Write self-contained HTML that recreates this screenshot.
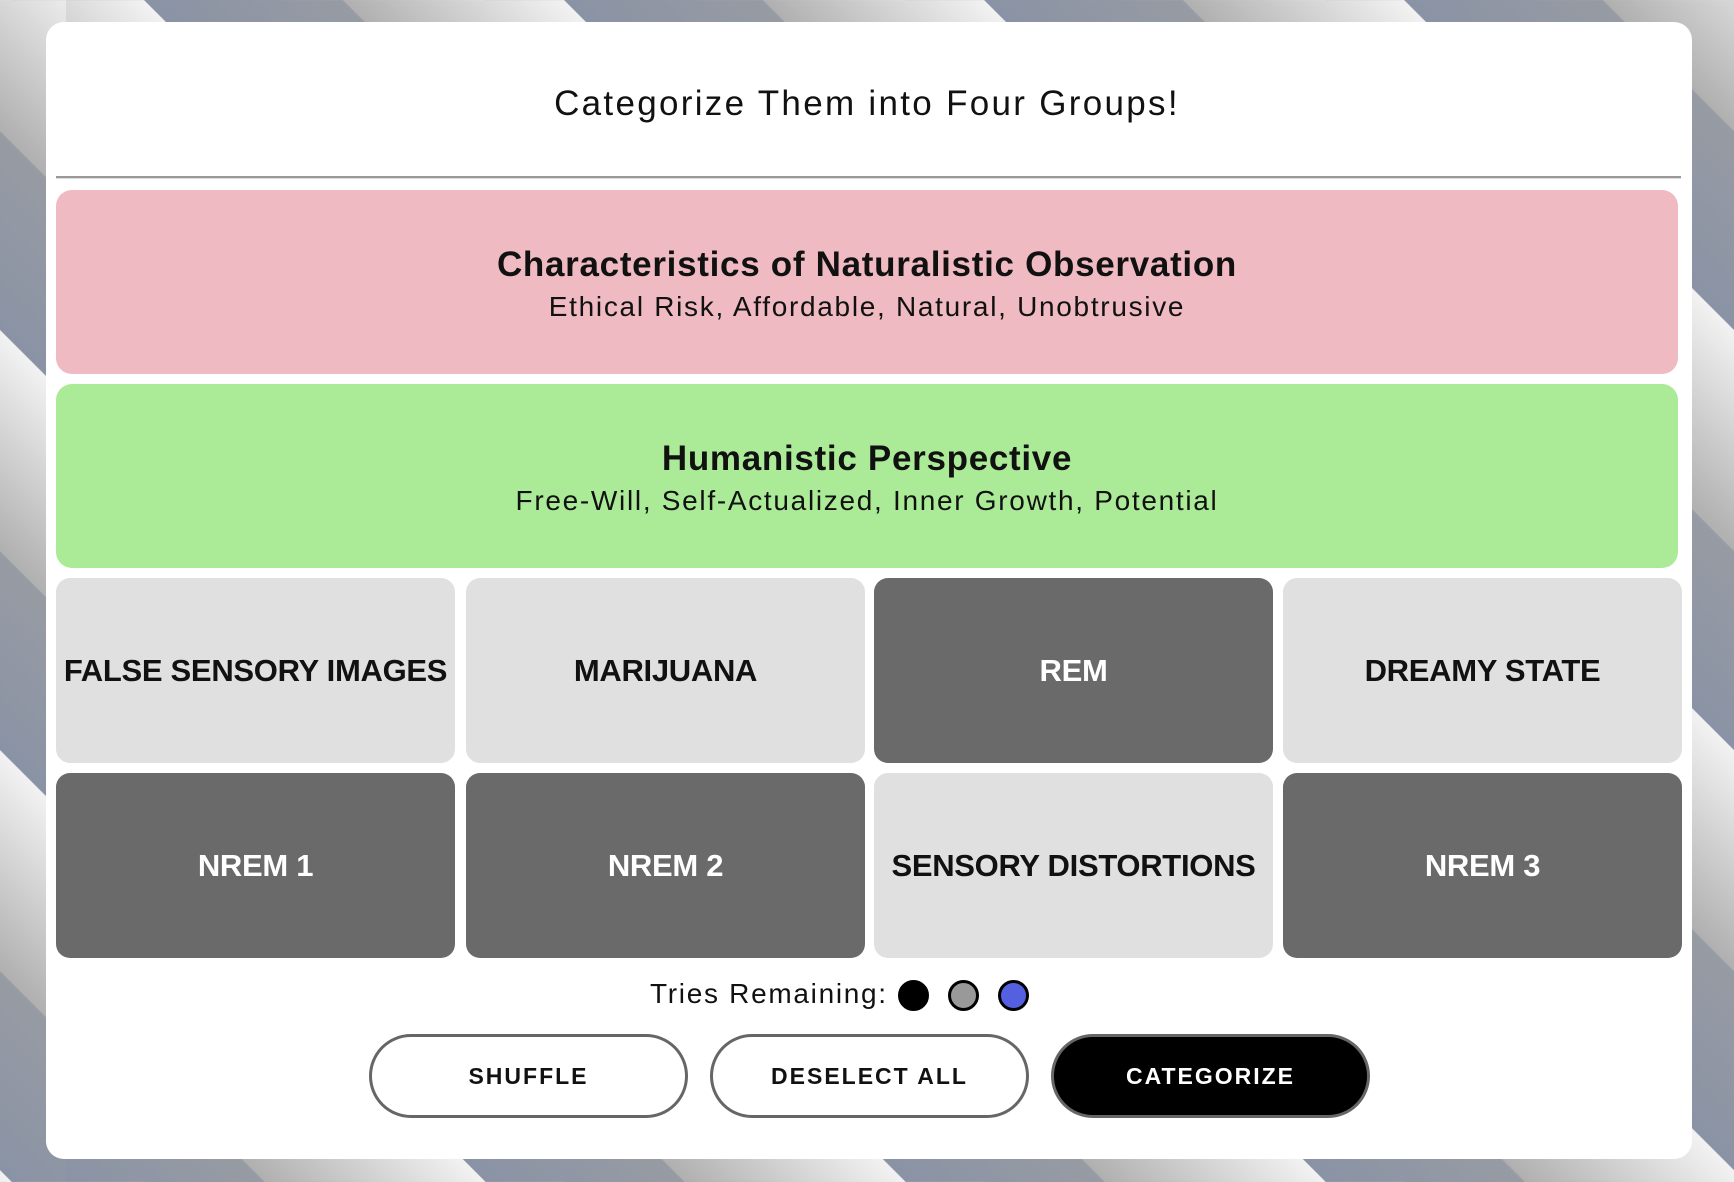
<!DOCTYPE html>
<html><head><meta charset="utf-8"><style>
*{box-sizing:border-box;margin:0;padding:0}
html,body{width:1734px;height:1182px;overflow:hidden}
body{font-family:"Liberation Sans",sans-serif;position:relative;
background:repeating-linear-gradient(45deg,#8a93a5 0px,#979ba3 140px,#b0b0b0 141px,#f2f2f2 297px);background-position:66px 0}
.card{position:absolute;left:46px;top:22px;width:1646px;height:1137px;background:#fff;border-radius:18px}
.title{position:absolute;left:0;right:0;top:84px;text-align:center;font-size:35px;color:#111;letter-spacing:2.3px}
.hr{position:absolute;left:56px;top:176px;width:1625px;height:2px;background:#999;box-shadow:0 1px 0 #ddd}
.grp{position:absolute;left:56px;width:1622px;height:184px;border-radius:16px;text-align:center;color:#111}
.grp h2{font-size:35px;font-weight:bold;margin-top:55px;letter-spacing:0.7px}
.grp p{font-size:28px;margin-top:6px;letter-spacing:1.7px}
.t{position:absolute;width:399px;height:185px;border-radius:14px;display:flex;align-items:center;justify-content:center;font-size:31px;font-weight:bold;background:#e0e0e0;color:#111;letter-spacing:-0.3px}
.d{background:#6a6a6a;color:#fff}
.tries{position:absolute;top:978px;left:0;right:0;font-size:28px;color:#111;letter-spacing:1.7px}
.dot{position:absolute;top:980px;width:31px;height:31px;border-radius:50%;border:3px solid #000}
.b{position:absolute;top:1034px;width:319px;height:84px;border-radius:42px;border:3px solid #666;background:#fff;display:flex;align-items:center;justify-content:center;font-size:23px;font-weight:bold;letter-spacing:2px;color:#111}
</style></head><body>
<div class="card"></div>
<div class="title">Categorize Them into Four Groups!</div>
<div class="hr"></div>
<div class="grp" style="top:190px;background:#efbac1"><h2>Characteristics of Naturalistic Observation</h2><p>Ethical Risk, Affordable, Natural, Unobtrusive</p></div>
<div class="grp" style="top:384px;background:#abeb98"><h2>Humanistic Perspective</h2><p>Free-Will, Self-Actualized, Inner Growth, Potential</p></div>
<div class="t" style="left:56px;top:578px">FALSE SENSORY IMAGES</div>
<div class="t" style="left:466px;top:578px">MARIJUANA</div>
<div class="t d" style="left:874px;top:578px">REM</div>
<div class="t" style="left:1283px;top:578px">DREAMY STATE</div>
<div class="t d" style="left:56px;top:773px">NREM 1</div>
<div class="t d" style="left:466px;top:773px">NREM 2</div>
<div class="t" style="left:874px;top:773px">SENSORY DISTORTIONS</div>
<div class="t d" style="left:1283px;top:773px">NREM 3</div>
<div class="tries"><span style="position:absolute;left:650px">Tries Remaining:</span></div>
<div class="dot" style="left:898px;background:#000"></div>
<div class="dot" style="left:948px;background:#999"></div>
<div class="dot" style="left:998px;background:#5560e0"></div>
<div class="b" style="left:369px">SHUFFLE</div>
<div class="b" style="left:710px">DESELECT ALL</div>
<div class="b" style="left:1051px;background:#000;color:#fff">CATEGORIZE</div>
</body></html>
